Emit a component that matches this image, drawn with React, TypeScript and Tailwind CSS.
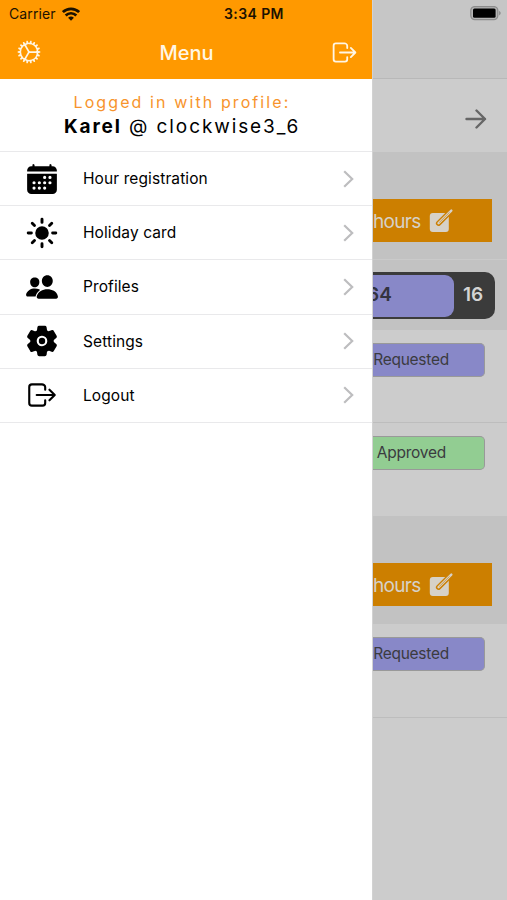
import React from "react";
import {
  IoCalendar,
  IoCogOutline,
  IoLogOutOutline,
  IoPeople,
  IoSettings,
  IoSunny,
} from "react-icons/io5";

const menu = [
  { label: "Hour registration", Icon: IoCalendar },
  { label: "Holiday card", Icon: IoSunny },
  { label: "Profiles", Icon: IoPeople },
  { label: "Settings", Icon: IoSettings },
  { label: "Logout", Icon: IoLogOutOutline },
];

function Wifi() {
  return (
    <svg width="18" height="14" viewBox="0 0 18 14" fill="none" stroke="#1c1200" strokeWidth="2.7">
      <path d="M0.9 5.1a11.6 11.6 0 0 1 16.2 0" />
      <path d="M3.7 8.5a7.4 7.4 0 0 1 10.6 0" />
      <path d="M9 13.7 6.1 10.8a4.2 4.2 0 0 1 5.8 0Z" fill="#1c1200" stroke="none" />
    </svg>
  );
}

function Chevron() {
  return (
    <svg width="11" height="18" viewBox="0 0 11 18" fill="none" stroke="#bdbdbf" strokeWidth="2.2">
      <path d="m1.2 1.2 8 7.8-8 7.8" />
    </svg>
  );
}

function EditIcon() {
  return (
    <svg width="24" height="24" viewBox="0 0 24 24" fill="none">
      <rect x="0.8" y="4" width="19" height="19" rx="3" fill="#d6d1c8" />
      <path d="m9.5 14.3 11.8-11.6" stroke="#cc7f00" strokeWidth="5.2" strokeLinecap="round" />
      <path d="m9.6 14.2 12.7-12.6" stroke="#d6d1c8" strokeWidth="2.4" strokeLinecap="round" />
      <path d="m10.2 13.6 10.4-10.3" stroke="#cc7f00" strokeWidth="0.6" />
    </svg>
  );
}

function HoursButton() {
  return (
    <div className="mr-[15px] flex h-[43px] items-center bg-[#cc7f00] text-[#d6d1c8]">
      <span className="w-14 pt-[3px] text-[19px] tracking-[-0.7px]">hours</span>
      <EditIcon />
    </div>
  );
}

function Badge({ label, color }: { label: string; color: string }) {
  return (
    <div
      className={`mr-[22px] flex h-[34px] items-center justify-end rounded-r-[5px] border border-l-0 border-[#999] text-[15.5px] tracking-[-0.25px] text-[#3b3b40] ${color}`}
    >
      {label}
    </div>
  );
}

export default function App() {
  return (
    <div className="flex h-[900px] w-[507px] overflow-hidden bg-white font-['Inter','Liberation_Sans',sans-serif] text-black">
      <aside className="flex w-[372px] shrink-0 flex-col">
        <header className="h-[79px] bg-[#ff9900]">
          <div className="flex h-[27px] items-center pl-[9px] text-[14px] text-[#1c1200]">
            <span className="w-[53px] tracking-[0.1px]">Carrier</span>
            <Wifi />
            <span className="ml-[144px] text-[14px] font-semibold tracking-[0.4px] whitespace-nowrap">3:34 PM</span>
          </div>
          <div className="flex h-[50px] items-center justify-between pr-[13px] pl-[15px] text-[#fff6e5]">
            <IoCogOutline className="size-7" />
            <h1 className="pt-px text-[20px] font-medium">Menu</h1>
            <IoLogOutOutline className="size-[29px]" />
          </div>
        </header>
        <section className="flex h-[72px] flex-col items-center pt-[11px] pr-[8px] whitespace-nowrap">
          <p className="text-[16px] leading-[24px] tracking-[2.1px] text-[#f7942c]">Logged in with profile:</p>
          <p className="text-[19px] leading-[25px] tracking-[1.9px]">
            <b>Karel</b> @ clockwise3_6
          </p>
        </section>
        <nav>
          {menu.map(({ label, Icon }) => (
            <div key={label} className="flex h-[54.2px] items-center border-t border-[#e9e9eb] pr-[18px] pl-[25px]">
              <Icon className="size-[34px]" />
              <span className="ml-[24px] flex-1 text-[15.5px] tracking-[0.1px]">{label}</span>
              <Chevron />
            </div>
          ))}
          <div className="border-t border-[#e9e9eb]" />
        </nav>
      </aside>
      <main className="flex min-w-0 flex-1 flex-col overflow-hidden border-l border-[#d2d2d2] bg-[#cccccc]">
        <div className="flex h-[79px] items-start justify-end border-b border-[#b8b8b8] bg-[#c6c6c6] pt-[6px] pr-[5px]">
          <svg width="32" height="15" viewBox="0 0 32 15">
            <rect x="0.8" y="0.6" width="27" height="13" rx="4" fill="#b4b4b4" stroke="#8c8c8c" strokeWidth="1.3" />
            <rect x="3" y="2.5" width="22.6" height="9.2" rx="1.5" fill="#000" />
            <path d="M29.2 4.7q3 2.4 0 4.8Z" fill="#858585" />
          </svg>
        </div>
        <div className="flex h-[73px] items-center justify-end pt-[7px] pr-5">
          <svg width="22" height="20" viewBox="0 0 22 20" fill="none" stroke="#666" strokeWidth="2.4" strokeLinecap="round" strokeLinejoin="round">
            <path d="M1.5 10h18.5M11.5 1.5l8.5 8.5-8.5 8.5" />
          </svg>
        </div>
        <section className="h-[178px] bg-[#c2c2c2] pt-[47px]">
          <HoursButton />
          <div className="mt-[17px] border-t border-[#cacaca] pt-[12px]">
            <div className="mr-[12px] flex h-[47px] items-center rounded-r-[10px] bg-[#3b3b3b] text-[19px] font-semibold">
              <div className="flex h-[42px] w-[81px] items-center overflow-hidden rounded-r-[9px] bg-[#8888c8] text-[#333340]">
                <span className="-ml-[6px]">64</span>
              </div>
              <span className="flex-1 pr-[3px] text-center text-[#d4d4d4]">16</span>
            </div>
          </div>
        </section>
        <section className="h-[93px] border-b border-[#bdbdbd] pt-[13px] [&>div]:pr-[35px]">
          <Badge label="Requested" color="bg-[#8888c8]" />
        </section>
        <section className="h-[93px] pt-[13px] [&>div]:pr-[38px]">
          <Badge label="Approved" color="bg-[#92cd92]" />
        </section>
        <section className="h-[108px] bg-[#c2c2c2] pt-[47px]">
          <HoursButton />
        </section>
        <section className="h-[94px] border-b border-[#bdbdbd] pt-[13px] [&>div]:pr-[35px]">
          <Badge label="Requested" color="bg-[#8888c8]" />
        </section>
      </main>
    </div>
  );
}
